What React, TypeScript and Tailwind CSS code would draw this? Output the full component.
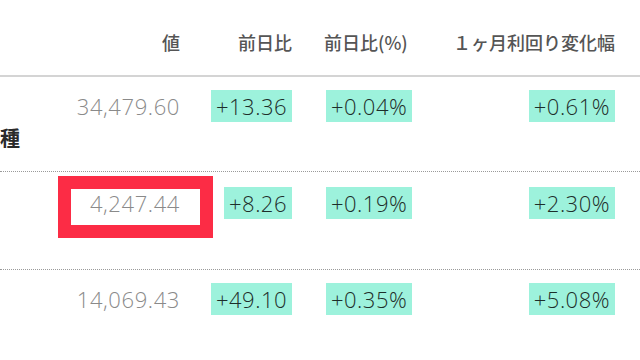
import React from "react";

const num = { fontFamily: '"Open Sans", "Noto Sans CJK JP", sans-serif' };
const jp = { fontFamily: '"Noto Sans CJK JP", sans-serif' };

function Badge({ children }: { children: React.ReactNode }) {
  return (
    <span
      className="inline-block bg-[#9df2dc] text-[#1d2e2a] text-[22px] font-light leading-[32px] px-[5px] tracking-[0.5px]"
      style={num}
    >
      {children}
    </span>
  );
}

type Row = {
  value: string;
  d: string;
  p: string;
  m: string;
  h: string;
  pt: string;
  boxed?: boolean;
  label?: string;
};

const rows: Row[] = [
  { value: "34,479.60", d: "+13.36", p: "+0.04%", m: "+0.61%", h: "h-[95px]", pt: "pt-[13px]", label: "種" },
  { value: "4,247.44", d: "+8.26", p: "+0.19%", m: "+2.30%", h: "h-[98px]", pt: "pt-[15px]", boxed: true },
  { value: "14,069.43", d: "+49.10", p: "+0.35%", m: "+5.08%", h: "h-[91px]", pt: "pt-[13px]" },
];

export default function App() {
  return (
    <div className="w-[640px] h-[360px] bg-white overflow-hidden">
      <div
        className="flex h-[77px] items-center pt-[10px] border-b-2 border-[#d4d4d4] text-[18px] font-medium text-[#555555]"
        style={jp}
      >
        <div className="w-[40px]" />
        <div className="w-[140px] text-right">値</div>
        <div className="w-[112px] text-right">前日比</div>
        <div className="w-[132px] pl-[32px]">前日比(%)</div>
        <div className="w-[191px] text-right">１ヶ月利回り変化幅</div>
      </div>
      {rows.map((r, i) => (
        <div
          key={i}
          className={`flex ${r.h} ${r.pt} items-start ${i < 2 ? "border-b border-dotted border-[#9a9a9a]" : ""}`}
        >
          <div className="w-[40px]">
            {r.label && (
              <div
                className="mt-[35px] text-[20px] leading-[26px] font-bold text-[#2a2a2a]"
                style={jp}
              >
                {r.label}
              </div>
            )}
          </div>
          <div className="w-[140px] relative text-right">
            {r.boxed && (
              <div className="absolute left-[18px] top-[-11px] w-[155px] h-[62px] border-[13px] border-[#fc2c45]" />
            )}
            <span
              className="relative text-[22px] font-light leading-[32px] text-[#8a8a8a] tracking-[0.6px]"
              style={num}
            >
              {r.value}
            </span>
          </div>
          <div className="w-[112px] flex justify-end">
            <Badge>{r.d}</Badge>
          </div>
          <div className="w-[134px] pl-[34px]">
            <Badge>{r.p}</Badge>
          </div>
          <div className="w-[189px] flex justify-end">
            <Badge>{r.m}</Badge>
          </div>
        </div>
      ))}
    </div>
  );
}
